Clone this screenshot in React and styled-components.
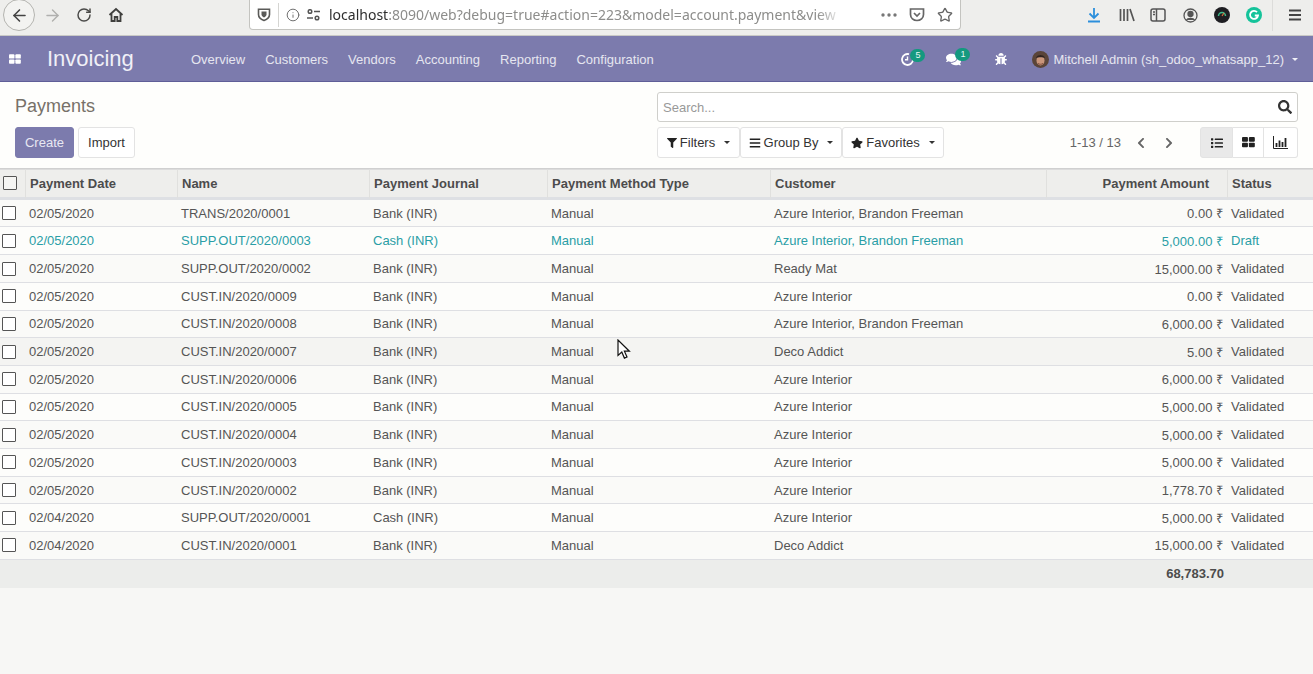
import React from 'react';
import styled, { createGlobalStyle } from 'styled-components';
import { ArrowLeft, ArrowRight, RotateCw, Info, Star } from 'lucide-react';
import { FaFilter, FaBars, FaStar, FaSearch, FaList, FaComments, FaBug, FaChevronLeft, FaChevronRight } from 'react-icons/fa';

const GlobalStyle = createGlobalStyle`
  html, body {
    margin: 0;
    padding: 0;
    height: 100%;
    overflow: hidden;
    background: #f7f7f5;
    font-family: "Liberation Sans", Arial, sans-serif;
    font-size: 13px;
    color: #4c4c4c;
  }
  #root { height: 100%; }
`;

const Page = styled.div`
  position: relative;
  width: 1313px;
  height: 674px;
  overflow: hidden;
`;

/* browser chrome */
const BrowserBar = styled.div`
  display: flex;
  align-items: center;
  height: 30px;
  padding-bottom: 5px;
  background: #eeeeec;
  border-bottom: 1px solid #c9c9c6;
  box-sizing: content-box;
`;

const BackButton = styled.div`
  display: flex;
  align-items: center;
  justify-content: center;
  flex: none;
  width: 32px;
  height: 32px;
  margin-left: 3px;
  border: 1px solid #b4b4b0;
  border-radius: 50%;
  background: #f3f3f1;
  color: #444;
  box-sizing: border-box;
`;

const ChromeIcon = styled.div`
  display: flex;
  align-items: center;
  justify-content: center;
  flex: none;
  width: ${p => p.$w || 20}px;
  margin-left: ${p => p.$ml || 0}px;
  color: ${p => p.$color || '#4a4a48'};
`;

const UrlBox = styled.div`
  display: flex;
  align-items: center;
  flex: none;
  width: 712px;
  height: 30px;
  margin-left: 123px;
  background: #fff;
  border: 1px solid #c4c4c0;
  border-top: none;
  border-radius: 0 0 4px 4px;
  box-sizing: border-box;
`;

const UrlDivider = styled.span`
  width: 1px;
  height: 24px;
  margin: 0 7px 0 7px;
  background: #d5d5d2;
`;

const UrlText = styled.div`
  width: 514px;
  margin-left: 8px;
  overflow: hidden;
  white-space: nowrap;
  font-family: "Noto Sans", sans-serif;
  font-size: 14px;
  color: #8d8d8b;
  -webkit-mask-image: linear-gradient(to right, #000 95%, transparent 100%);
  mask-image: linear-gradient(to right, #000 95%, transparent 100%);

  b {
    font-weight: 400;
    color: #2e2e2e;
  }
`;

const ChromeRight = styled.div`
  display: flex;
  align-items: center;
  margin-left: 125px;
`;

const ChromeSep = styled.span`
  width: 1px;
  height: 32px;
  margin-left: 10px;
  background: #dcdcda;
`;

/* odoo main navbar */
const Navbar = styled.header`
  display: flex;
  align-items: center;
  height: 44px;
  padding-top: 1px;
  background: #7c7bad;
  border-bottom: 1px solid #5f5e97;
  color: #fff;
  box-sizing: content-box;
`;

const AppsIcon = styled.svg`
  width: 12px;
  height: 10px;
  margin-left: 9px;
`;

const Brand = styled.div`
  margin-left: 26px;
  width: 144px;
  font-size: 22px;
  color: #f0f0f7;
`;

const NavMenu = styled.nav`
  display: flex;
  gap: 20px;
`;

const NavLink = styled.span`
  font-size: 13px;
  color: #e6e6f0;
`;

const NavRight = styled.div`
  display: flex;
  align-items: center;
  margin-left: auto;
  height: 100%;
  padding-right: 15px;
`;

const NavIcon = styled.div`
  position: relative;
  display: flex;
  align-items: center;
  margin-left: ${p => p.$ml}px;
  color: #fff;
`;

const Badge = styled.span`
  position: absolute;
  top: -4px;
  left: 9px;
  width: 15px;
  height: 13px;
  border-radius: 7px;
  background: #14997f;
  color: #e8f6f3;
  font-size: 9px;
  line-height: 13px;
  text-align: center;
`;

const UserName = styled.span`
  margin-left: 4px;
  font-size: 13px;
  color: #e6e6f0;
`;

const Caret = styled.span`
  display: inline-block;
  width: 0;
  height: 0;
  margin-left: ${p => p.$ml ?? 6}px;
  border-top: 3.5px solid ${p => p.$color || 'currentColor'};
  border-left: 3.5px solid transparent;
  border-right: 3.5px solid transparent;
`;

/* control panel */
const ControlPanel = styled.section`
  display: grid;
  grid-template-columns: 657px 1fr;
  height: 87px;
  padding: 0 15px;
  background: #fefefc;
  border-bottom: 1px solid #d0d0d0;
  box-sizing: border-box;
  width: 1313px;
`;

const PanelLeft = styled.div`
  display: flex;
  flex-direction: column;
  padding-top: 14px;
`;

const PageTitle = styled.h1`
  margin: 0;
  font-size: 18px;
  line-height: 20px;
  font-weight: 400;
  color: #777169;
`;

const ButtonRow = styled.div`
  display: flex;
  gap: 4px;
  margin-top: 11px;
`;

const PrimaryButton = styled.button`
  height: 31px;
  width: 59px;
  padding: 0;
  background: #7c7bad;
  border: 1px solid #7c7bad;
  border-radius: 3px;
  color: #e8e8f2;
  font: 13px "Liberation Sans", sans-serif;
`;

const GhostButton = styled.button`
  display: flex;
  align-items: center;
  justify-content: center;
  height: 31px;
  width: ${p => p.$w}px;
  padding: 0;
  background: ${p => (p.$active ? '#e9e9e9' : '#fff')};
  border: 1px solid #e3e3e3;
  border-radius: 3px;
  color: #333;
  font: 13px "Liberation Sans", sans-serif;
`;

const PanelRight = styled.div`
  display: flex;
  flex-direction: column;
  padding-top: 10px;
  margin-left: -15px;
`;

const SearchBox = styled.div`
  display: flex;
  align-items: center;
  justify-content: space-between;
  height: 30px;
  width: 641px;
  padding: 0 5px;
  background: #fff;
  border: 1px solid #cfcfcb;
  border-radius: 3px;
  box-sizing: border-box;
  color: #999;
  font-size: 13px;
`;

const ToolRow = styled.div`
  display: flex;
  align-items: center;
  margin-top: 5px;
  height: 31px;
  width: 641px;
`;

const FilterButton = styled(GhostButton)`
  gap: 3px;
  color: #333;
`;

const Pager = styled.span`
  margin-left: auto;
  color: #666;
  font-size: 13px;
`;

const PagerArrows = styled.div`
  display: flex;
  gap: 16px;
  margin: 0 25px 0 14px;
  color: #666;
`;

const ViewSwitch = styled.div`
  display: flex;
`;

const ViewButton = styled(GhostButton)`
  width: ${p => p.$w}px;
  border-radius: ${p => p.$radius || 0};
  border-left-width: ${p => (p.$first ? 1 : 0)}px;
`;

/* payments table */
const Table = styled.table`
  width: 1313px;
  table-layout: fixed;
  border-collapse: separate;
  border-spacing: 0;
  font-size: 13px;
`;

const HeadCell = styled.th`
  height: 26.8px;
  padding: 0 ${p => p.$pr || 3}px 0 4px;
  background: #eeeeec;
  border-top: 1px solid #dcdcdc;
  border-bottom: 3px solid #dee0e4;
  border-right: 1px solid #e0e0de;
  color: #4c4c4c;
  font-size: 13px;
  font-weight: 700;
  text-align: ${p => p.$align || 'left'};
  white-space: nowrap;
  &:last-child { border-right: none; }
`;

const Row = styled.tr`
  color: ${p => (p.$draft ? '#2a9ea6' : '#555')};
  background: ${p => (p.$hover ? '#f4f4f2' : p.$alt ? '#fdfdfb' : '#fafaf8')};
`;

const Cell = styled.td`
  height: 26.7px;
  padding: 0 ${p => p.$pr || 3}px 0 3px;
  border-bottom: 1px solid #dedfe3;
  white-space: nowrap;
  overflow: hidden;
  text-align: ${p => p.$align || 'left'};
`;

const CheckCell = styled(Cell)`
  padding: 0 0 0 2px;
`;

const Check = styled.span`
  display: block;
  width: 12px;
  height: 12px;
  border: 1px solid #555;
  background: #fff;
  border-radius: 1px;
`;

const HeadCheck = styled(Check)`
  margin-left: -1px;
  background: #f5f5f3;
`;

const FootCell = styled.td`
  height: 28px;
  padding: 0 ${p => p.$pr || 3}px 0 3px;
  background: #ecedeb;
  color: #4c4c4c;
  font-weight: 700;
  text-align: ${p => p.$align || 'left'};
`;

const Cursor = styled.svg`
  position: absolute;
  left: 617px;
  top: 339px;
  width: 14px;
  height: 21px;
`;

const rows = [
  ['02/05/2020', 'TRANS/2020/0001', 'Bank (INR)', 'Azure Interior, Brandon Freeman', '0.00', 'Validated'],
  ['02/05/2020', 'SUPP.OUT/2020/0003', 'Cash (INR)', 'Azure Interior, Brandon Freeman', '5,000.00', 'Draft'],
  ['02/05/2020', 'SUPP.OUT/2020/0002', 'Bank (INR)', 'Ready Mat', '15,000.00', 'Validated'],
  ['02/05/2020', 'CUST.IN/2020/0009', 'Bank (INR)', 'Azure Interior', '0.00', 'Validated'],
  ['02/05/2020', 'CUST.IN/2020/0008', 'Bank (INR)', 'Azure Interior, Brandon Freeman', '6,000.00', 'Validated'],
  ['02/05/2020', 'CUST.IN/2020/0007', 'Bank (INR)', 'Deco Addict', '5.00', 'Validated'],
  ['02/05/2020', 'CUST.IN/2020/0006', 'Bank (INR)', 'Azure Interior', '6,000.00', 'Validated'],
  ['02/05/2020', 'CUST.IN/2020/0005', 'Bank (INR)', 'Azure Interior', '5,000.00', 'Validated'],
  ['02/05/2020', 'CUST.IN/2020/0004', 'Bank (INR)', 'Azure Interior', '5,000.00', 'Validated'],
  ['02/05/2020', 'CUST.IN/2020/0003', 'Bank (INR)', 'Azure Interior', '5,000.00', 'Validated'],
  ['02/05/2020', 'CUST.IN/2020/0002', 'Bank (INR)', 'Azure Interior', '1,778.70', 'Validated'],
  ['02/04/2020', 'SUPP.OUT/2020/0001', 'Cash (INR)', 'Azure Interior', '5,000.00', 'Validated'],
  ['02/04/2020', 'CUST.IN/2020/0001', 'Bank (INR)', 'Deco Addict', '15,000.00', 'Validated'],
];

const columns = [26, 152, 192, 178, 223, 276, 181, 85];

const GridIcon = ({ size = 14, color = '#222' }) => (
  <svg width={size} height={size * 0.8} viewBox="0 0 14 11">
    <rect x="0" y="0" width="6.4" height="5" rx="1" fill={color} />
    <rect x="7.4" y="0" width="6.4" height="5" rx="1" fill={color} />
    <rect x="0" y="6" width="6.4" height="5" rx="1" fill={color} />
    <rect x="7.4" y="6" width="6.4" height="5" rx="1" fill={color} />
  </svg>
);

const App = () => (
  <Page>
    <GlobalStyle />
    <BrowserBar>
      <BackButton><ArrowLeft size={19} strokeWidth={2} /></BackButton>
      <ChromeIcon $w={20} $ml={7} $color="#b0b0ae"><ArrowRight size={19} strokeWidth={1.8} /></ChromeIcon>
      <ChromeIcon $w={20} $ml={12}><RotateCw size={16} strokeWidth={2.2} /></ChromeIcon>
      <ChromeIcon $w={20} $ml={12}>
        <svg width="16" height="16" viewBox="0 0 16 16" fill="none" stroke="#3f3f3d" strokeWidth="1.8">
          <path d="M1.5 8 8 2l6.5 6" />
          <path d="M3.5 7v7h3.2v-4h2.6v4h3.2V7" />
        </svg>
      </ChromeIcon>
      <UrlBox>
        <ChromeIcon $w={14} $ml={7} $color="#555">
          <svg width="14" height="15" viewBox="0 0 14 15" fill="none" stroke="#5a5a58" strokeWidth="1.6">
            <path d="M1.5 2.2h11v5.3c0 3-2.8 5-5.5 6-2.700-1-5.500-3-5.500-6z" />
            <path d="M4.500 4.500h5v3c0 1.400-1.300 2.400-2.500 3-1.200-.6-2.500-1.600-2.500-3z" fill="#5a5a58" stroke="none" />
          </svg>
        </ChromeIcon>
        <UrlDivider />
        <ChromeIcon $w={14} $color="#666"><Info size={14} strokeWidth={1.6} /></ChromeIcon>
        <ChromeIcon $w={16} $ml={5}>
          <svg width="15" height="12" viewBox="0 0 15 12" fill="none" stroke="#555" strokeWidth="1.500">
            <circle cx="4" cy="2.500" r="1.800" />
            <path d="M8 2.500h6M1 9h6" />
            <circle cx="11" cy="9" r="1.800" />
          </svg>
        </ChromeIcon>
        <UrlText><b>localhost</b>:8090/web?debug=true#action=223&amp;model=account.payment&amp;view</UrlText>
        <ChromeIcon $w={16} $ml={38} $color="#777">
          <svg width="16" height="4" viewBox="0 0 16 4" fill="#777">
            <circle cx="2" cy="2" r="1.700" /><circle cx="8" cy="2" r="1.700" /><circle cx="14" cy="2" r="1.700" />
          </svg>
        </ChromeIcon>
        <ChromeIcon $w={16} $ml={12}>
          <svg width="16" height="15" viewBox="0 0 16 15" fill="none" stroke="#666" strokeWidth="1.700">
            <path d="M1.500 2h13v5.500c0 3.500-3 6-6.500 6s-6.500-2.500-6.500-6z" />
            <path d="M5 6l3 3 3-3" />
          </svg>
        </ChromeIcon>
        <ChromeIcon $w={16} $ml={12} $color="#666"><Star size={16} strokeWidth={2} /></ChromeIcon>
      </UrlBox>
      <ChromeRight>
        <ChromeIcon $w={16}>
          <svg width="14" height="16" viewBox="0 0 14 16" fill="none" stroke="#2c8fdc" strokeWidth="1.800">
            <path d="M7 1v10M2.500 6.500 7 11l4.500-4.500M1 14.500h12" />
          </svg>
        </ChromeIcon>
        <ChromeIcon $w={16} $ml={17}>
          <svg width="16" height="14" viewBox="0 0 16 14" fill="none" stroke="#555" strokeWidth="1.700">
            <path d="M1.500 1v12M5 1v12M8.500 1v12M11 1l4 12" />
          </svg>
        </ChromeIcon>
        <ChromeIcon $w={16} $ml={15}>
          <svg width="16" height="14" viewBox="0 0 16 14" fill="none" stroke="#555" strokeWidth="1.500">
            <rect x="1" y="1" width="14" height="12" rx="2" />
            <path d="M6.500 1v12M3 4h2M3 6.500h2" />
          </svg>
        </ChromeIcon>
        <ChromeIcon $w={16} $ml={16}>
          <svg width="15" height="15" viewBox="0 0 15 15" fill="none" stroke="#555" strokeWidth="1.300">
            <circle cx="7.500" cy="7.500" r="6.500" />
            <circle cx="7.500" cy="6" r="2.500" fill="#555" />
            <path d="M3.500 12c1-2 7-2 8 0" fill="#555" />
          </svg>
        </ChromeIcon>
        <ChromeIcon $w={16} $ml={16}>
          <svg width="16" height="16" viewBox="0 0 16 16">
            <circle cx="8" cy="8" r="8" fill="#1e1e22" />
            <path d="M4.500 9a3.500 3.500 0 0 1 7 0" fill="none" stroke="#3fb98a" strokeWidth="1.500" />
            <path d="M8 9l2-3" stroke="#e0703a" strokeWidth="1.200" />
          </svg>
        </ChromeIcon>
        <ChromeIcon $w={16} $ml={16}>
          <svg width="16" height="16" viewBox="0 0 16 16">
            <circle cx="8" cy="8" r="8" fill="#15c39a" />
            <path d="M11 5.200A4 4 0 1 0 12 8.500H8.800" fill="none" stroke="#fff" strokeWidth="1.800" />
          </svg>
        </ChromeIcon>
        <ChromeSep />
        <ChromeIcon $w={14} $ml={15}>
          <svg width="14" height="12" viewBox="0 0 14 12" stroke="#444" strokeWidth="1.800">
            <path d="M1 1.500h12M1 6h12M1 10.500h12" />
          </svg>
        </ChromeIcon>
      </ChromeRight>
    </BrowserBar>

    <Navbar>
      <AppsIcon viewBox="0 0 14 11">
        <rect x="0" y="0" width="6.400" height="5" rx="1" fill="#fff" />
        <rect x="7.400" y="0" width="6.400" height="5" rx="1" fill="#fff" />
        <rect x="0" y="6" width="6.400" height="5" rx="1" fill="#fff" />
        <rect x="7.400" y="6" width="6.400" height="5" rx="1" fill="#fff" />
      </AppsIcon>
      <Brand>Invoicing</Brand>
      <NavMenu>
        <NavLink>Overview</NavLink>
        <NavLink>Customers</NavLink>
        <NavLink>Vendors</NavLink>
        <NavLink>Accounting</NavLink>
        <NavLink>Reporting</NavLink>
        <NavLink>Configuration</NavLink>
      </NavMenu>
      <NavRight>
        <NavIcon $ml={0}>
          <svg width="13" height="13" viewBox="0 0 13 13" fill="none" stroke="#fff" strokeWidth="1.800">
            <path d="M8 1.200A5.500 5.500 0 1 0 12 7" />
            <path d="M6.500 3.500v3.200H4" strokeWidth="1.400" />
          </svg>
          <Badge>5</Badge>
        </NavIcon>
        <NavIcon $ml={32}>
          <FaComments size={15} />
          <Badge>1</Badge>
        </NavIcon>
        <NavIcon $ml={34}><FaBug size={12} /></NavIcon>
        <NavIcon $ml={25}>
          <svg width="17" height="17" viewBox="0 0 17 17">
            <circle cx="8.500" cy="8.500" r="8.500" fill="#5a4438" />
            <ellipse cx="8.500" cy="9.500" rx="4" ry="5" fill="#c9957a" />
            <path d="M4 7c1-4 8-4 9 0-2-1-7-1-9 0z" fill="#2e2320" />
            <path d="M6 12.500c1.500 1 3.500 1 5 0" stroke="#7d4a3a" fill="none" />
          </svg>
        </NavIcon>
        <UserName>Mitchell Admin (sh_odoo_whatsapp_12)</UserName>
        <Caret $ml={8} $color="#f0f0f7" />
      </NavRight>
    </Navbar>

    <ControlPanel>
      <PanelLeft>
        <PageTitle>Payments</PageTitle>
        <ButtonRow>
          <PrimaryButton>Create</PrimaryButton>
          <GhostButton $w={57}>Import</GhostButton>
        </ButtonRow>
      </PanelLeft>
      <PanelRight>
        <SearchBox>
          <span>Search...</span>
          <FaSearch size={14} color="#333" />
        </SearchBox>
        <ToolRow>
          <FilterButton $w={83}><FaFilter size={10} color="#222" /> Filters <Caret $color="#333" /></FilterButton>
          <FilterButton $w={102}><FaBars size={12} color="#222" /> Group By <Caret $color="#333" /></FilterButton>
          <FilterButton $w={102}><FaStar size={12} color="#222" /> Favorites <Caret $color="#333" /></FilterButton>
          <Pager>1-13 / 13</Pager>
          <PagerArrows>
            <FaChevronLeft size={12} />
            <FaChevronRight size={12} />
          </PagerArrows>
          <ViewSwitch>
            <ViewButton $w={33} $first $active $radius="3px 0 0 3px"><FaList size={12} color="#222" /></ViewButton>
            <ViewButton $w={31}><GridIcon size={13} /></ViewButton>
            <ViewButton $w={34} $radius="0 3px 3px 0">
              <svg width="15" height="13" viewBox="0 0 15 13" fill="none" stroke="#222">
                <path d="M.500 0v12.500H15" />
                <path d="M3.500 11V7M6.500 11V4.500M9.500 11V6M12.500 11V2" strokeWidth="1.800" />
              </svg>
            </ViewButton>
          </ViewSwitch>
        </ToolRow>
      </PanelRight>
    </ControlPanel>

    <Table>
      <colgroup>
        {columns.map((w, i) => <col key={i} width={w} />)}
      </colgroup>
      <thead>
        <tr>
          <HeadCell><HeadCheck /></HeadCell>
          <HeadCell>Payment Date</HeadCell>
          <HeadCell>Name</HeadCell>
          <HeadCell>Payment Journal</HeadCell>
          <HeadCell>Payment Method Type</HeadCell>
          <HeadCell>Customer</HeadCell>
          <HeadCell $align="right" $pr={18}>Payment Amount</HeadCell>
          <HeadCell>Status</HeadCell>
        </tr>
      </thead>
      <tbody>
        {rows.map((r, i) => (
          <Row key={i} $draft={r[5] === 'Draft'} $alt={i % 2 === 1} $hover={i === 5}>
            <CheckCell><Check /></CheckCell>
            <Cell>{r[0]}</Cell>
            <Cell>{r[1]}</Cell>
            <Cell>{r[2]}</Cell>
            <Cell>Manual</Cell>
            <Cell>{r[3]}</Cell>
            <Cell $align="right" $pr={5}>{r[4]} ₹</Cell>
            <Cell>{r[5]}</Cell>
          </Row>
        ))}
      </tbody>
      <tfoot>
        <tr>
          <FootCell colSpan={6} />
          <FootCell $align="right" $pr={4}>68,783.70</FootCell>
          <FootCell />
        </tr>
      </tfoot>
    </Table>

    <Cursor viewBox="0 0 14 21">
      <path d="M1 1v15.500l3.800-3.400 2.600 6 2.600-1.100-2.600-5.800h5z" fill="#fff" stroke="#111" strokeWidth="1.200" />
    </Cursor>
  </Page>
);

export default App;
